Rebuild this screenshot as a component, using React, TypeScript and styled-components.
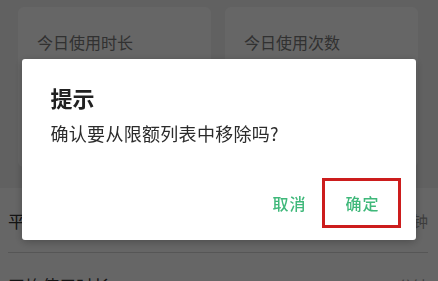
import React from 'react';
import styled, { createGlobalStyle } from 'styled-components';

const GlobalStyle = createGlobalStyle`
    html, body {
        margin: 0;
        padding: 0;
        background: #f2f2f2;
        font-family: "Noto Sans CJK SC", "Noto Sans", sans-serif;
    }
`;

const Page = styled.div`
    width: 438px;
    height: 281px;
    overflow: hidden;
    background: #f2f2f2;
`;

const StatsArea = styled.div`
    height: 181px;
    padding: 7px 20px 0 18px;
    display: grid;
    grid-template-columns: 193px 193px;
    column-gap: 14px;
`;

const StatCard = styled.div`
    background: #ffffff;
    border-radius: 6px;
    height: 160px;
    padding: 24px 19px 0;
    box-sizing: border-box;
`;

const StatLabel = styled.div`
    font-size: 16px;
    line-height: 22px;
    color: #7a7a7a;
`;

const List = styled.div`
    background: #ffffff;
    padding: 0 10px 0 8px;
`;

const ListRow = styled.div<{ $divider?: boolean }>`
    height: 64px;
    display: flex;
    align-items: center;
    justify-content: space-between;
    border-bottom: ${(p) => (p.$divider ? '1px solid #d8d8d8' : 'none')};
`;

const RowLabel = styled.span`
    font-size: 17px;
    color: #333333;
`;

const RowValue = styled.span`
    font-size: 15px;
    color: #999999;
`;

const Overlay = styled.div`
    position: fixed;
    inset: 0;
    background: rgba(0, 0, 0, 0.6);
    display: flex;
    justify-content: center;
    align-items: flex-start;
    padding-top: 59px;
`;

const Dialog = styled.div`
    width: 394px;
    margin-left: -1px;
    background: #ffffff;
    border-radius: 3px;
    box-shadow: 0 2px 8px rgba(0, 0, 0, 0.25);
    padding: 24px 15px 12px 29px;
    box-sizing: border-box;
`;

const Title = styled.div`
    font-size: 22px;
    line-height: 29px;
    font-weight: 700;
    color: #212121;
`;

const Message = styled.div`
    margin-top: 9px;
    font-size: 18px;
    line-height: 25px;
    letter-spacing: 0.3px;
    color: #2b2b2b;
`;

const Actions = styled.div`
    margin-top: 32px;
    display: flex;
    justify-content: flex-end;
`;

const ActionButton = styled.button<{ $outlined?: boolean }>`
    height: 50px;
    width: ${(p) => (p.$outlined ? '79px' : '64px')};
    box-sizing: border-box;
    border: ${(p) => (p.$outlined ? '3px solid #cc1d1d' : 'none')};
    background: transparent;
    padding: 0 0 0 ${(p) => (p.$outlined ? '3px' : '0')};
    font-family: inherit;
    font-size: 16px;
    font-weight: 500;
    letter-spacing: 1px;
    color: #3fb87a;
    cursor: pointer;
`;

export default function App() {
    return (
        <React.Fragment>
            <GlobalStyle />
            <Page>
                <StatsArea>
                    <StatCard>
                        <StatLabel>今日使用时长</StatLabel>
                    </StatCard>
                    <StatCard>
                        <StatLabel>今日使用次数</StatLabel>
                    </StatCard>
                </StatsArea>
                <List>
                    <ListRow $divider>
                        <RowLabel>平均使用次数</RowLabel>
                        <RowValue>0分钟</RowValue>
                    </ListRow>
                    <ListRow>
                        <RowLabel>平均使用时长</RowLabel>
                        <RowValue>0分钟</RowValue>
                    </ListRow>
                </List>
            </Page>
            <Overlay>
                <Dialog>
                    <Title>提示</Title>
                    <Message>确认要从限额列表中移除吗?</Message>
                    <Actions>
                        <ActionButton>取消</ActionButton>
                        <ActionButton $outlined>确定</ActionButton>
                    </Actions>
                </Dialog>
            </Overlay>
        </React.Fragment>
    );
}
